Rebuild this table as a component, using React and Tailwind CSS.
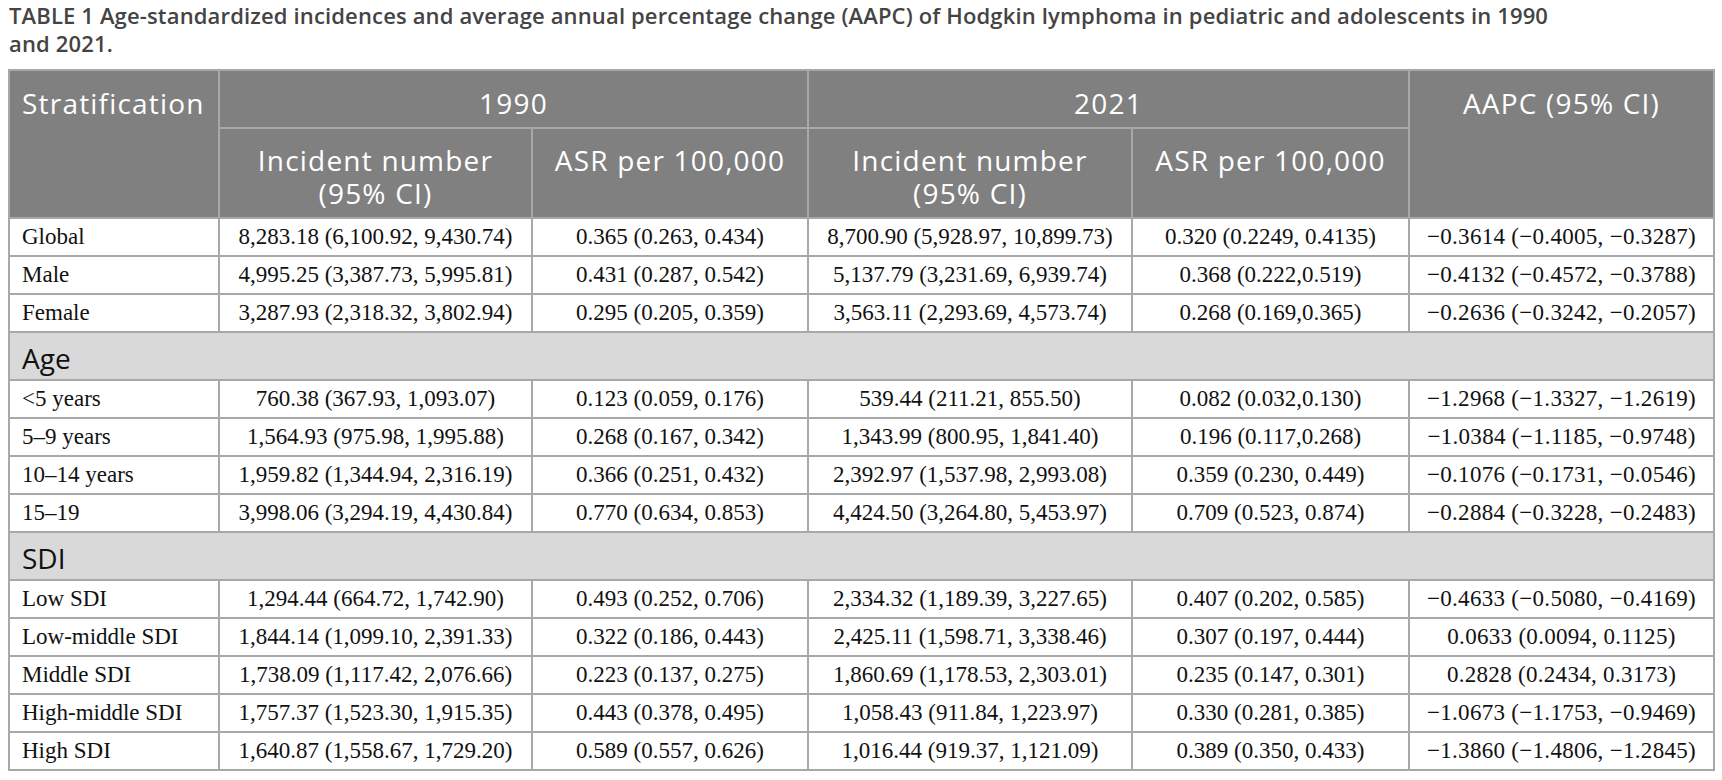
import React from "react";

const rows1 = [
  ["Global", "8,283.18 (6,100.92, 9,430.74)", "0.365 (0.263, 0.434)", "8,700.90 (5,928.97, 10,899.73)", "0.320 (0.2249, 0.4135)", "−0.3614 (−0.4005, −0.3287)"],
  ["Male", "4,995.25 (3,387.73, 5,995.81)", "0.431 (0.287, 0.542)", "5,137.79 (3,231.69, 6,939.74)", "0.368 (0.222,0.519)", "−0.4132 (−0.4572, −0.3788)"],
  ["Female", "3,287.93 (2,318.32, 3,802.94)", "0.295 (0.205, 0.359)", "3,563.11 (2,293.69, 4,573.74)", "0.268 (0.169,0.365)", "−0.2636 (−0.3242, −0.2057)"],
];
const rowsAge = [
  ["<5 years", "760.38 (367.93, 1,093.07)", "0.123 (0.059, 0.176)", "539.44 (211.21, 855.50)", "0.082 (0.032,0.130)", "−1.2968 (−1.3327, −1.2619)"],
  ["5–9 years", "1,564.93 (975.98, 1,995.88)", "0.268 (0.167, 0.342)", "1,343.99 (800.95, 1,841.40)", "0.196 (0.117,0.268)", "−1.0384 (−1.1185, −0.9748)"],
  ["10–14 years", "1,959.82 (1,344.94, 2,316.19)", "0.366 (0.251, 0.432)", "2,392.97 (1,537.98, 2,993.08)", "0.359 (0.230, 0.449)", "−0.1076 (−0.1731, −0.0546)"],
  ["15–19", "3,998.06 (3,294.19, 4,430.84)", "0.770 (0.634, 0.853)", "4,424.50 (3,264.80, 5,453.97)", "0.709 (0.523, 0.874)", "−0.2884 (−0.3228, −0.2483)"],
];
const rowsSdi = [
  ["Low SDI", "1,294.44 (664.72, 1,742.90)", "0.493 (0.252, 0.706)", "2,334.32 (1,189.39, 3,227.65)", "0.407 (0.202, 0.585)", "−0.4633 (−0.5080, −0.4169)"],
  ["Low-middle SDI", "1,844.14 (1,099.10, 2,391.33)", "0.322 (0.186, 0.443)", "2,425.11 (1,598.71, 3,338.46)", "0.307 (0.197, 0.444)", "0.0633 (0.0094, 0.1125)"],
  ["Middle SDI", "1,738.09 (1,117.42, 2,076.66)", "0.223 (0.137, 0.275)", "1,860.69 (1,178.53, 2,303.01)", "0.235 (0.147, 0.301)", "0.2828 (0.2434, 0.3173)"],
  ["High-middle SDI", "1,757.37 (1,523.30, 1,915.35)", "0.443 (0.378, 0.495)", "1,058.43 (911.84, 1,223.97)", "0.330 (0.281, 0.385)", "−1.0673 (−1.1753, −0.9469)"],
  ["High SDI", "1,640.87 (1,558.67, 1,729.20)", "0.589 (0.557, 0.626)", "1,016.44 (919.37, 1,121.09)", "0.389 (0.350, 0.433)", "−1.3860 (−1.4806, −1.2845)"],
];

const serif = { fontFamily: '"Liberation Serif", "Times New Roman", serif' };

function DataRow({ r }) {
  return (
    <tr className="h-[38px]">
      {r.map((c, i) => (
        <td
          key={i}
          className={`border-2 border-[#a8a8a8] align-middle text-[23px] leading-[26px] text-[#111] whitespace-nowrap ${i === 0 ? "text-left pl-[12px]" : i === 5 ? "text-center tracking-[0.3px]" : "text-center"}`}
          style={serif}
        >
          {c}
        </td>
      ))}
    </tr>
  );
}

function SectionRow({ label }) {
  return (
    <tr className="h-[48px] bg-[#d9d9d9]">
      <td colSpan={6} className="border-2 border-[#a8a8a8] pl-[12px] pt-[3px] align-middle text-[28px] leading-[34px] text-[#111] font-['Open_Sans',sans-serif]">
        {label}
      </td>
    </tr>
  );
}

export default function App() {
  const th = "border-2 border-[#a8a8a8] align-top font-normal text-white text-[28px] leading-[33px] tracking-[1.2px] font-['Open_Sans',sans-serif] whitespace-nowrap";
  return (
    <div className="w-[1722px] h-[780px] bg-white overflow-hidden">
      <div className="pl-[9px] pt-[1px] text-[22px] leading-[28px] tracking-[0.15px] font-semibold text-[#444] font-['Open_Sans',sans-serif] whitespace-nowrap">
        TABLE 1 Age-standardized incidences and average annual percentage change (AAPC) of Hodgkin lymphoma in pediatric and adolescents in 1990
        <br />
        and 2021.
      </div>
      <div className="pl-[8px] pt-[12px]">
        <table className="border-collapse table-fixed w-[1705px]">
          <colgroup>
            <col className="w-[210px]" />
            <col className="w-[313px]" />
            <col className="w-[276px]" />
            <col className="w-[324px]" />
            <col className="w-[277px]" />
            <col className="w-[305px]" />
          </colgroup>
          <thead className="bg-[#808080]">
            <tr className="h-[58px]">
              <th rowSpan={2} className={`${th} text-left pl-[12px] pt-[16px]`}>Stratification</th>
              <th colSpan={2} className={`${th} text-center pt-[16px]`}>1990</th>
              <th colSpan={2} className={`${th} text-center pt-[16px]`}>2021</th>
              <th rowSpan={2} className={`${th} text-center pt-[16px]`}>AAPC (95% CI)</th>
            </tr>
            <tr className="h-[90px]">
              <th className={`${th} text-center pt-[15px]`}>
                <div>Incident number</div>
                <div>(95% CI)</div>
              </th>
              <th className={`${th} text-center pt-[15px]`}>ASR per 100,000</th>
              <th className={`${th} text-center pt-[15px]`}>
                <div>Incident number</div>
                <div>(95% CI)</div>
              </th>
              <th className={`${th} text-center pt-[15px]`}>ASR per 100,000</th>
            </tr>
          </thead>
          <tbody>
            {rows1.map((r, i) => <DataRow key={"a" + i} r={r} />)}
            <SectionRow label="Age" />
            {rowsAge.map((r, i) => <DataRow key={"b" + i} r={r} />)}
            <SectionRow label="SDI" />
            {rowsSdi.map((r, i) => <DataRow key={"c" + i} r={r} />)}
          </tbody>
        </table>
      </div>
    </div>
  );
}
